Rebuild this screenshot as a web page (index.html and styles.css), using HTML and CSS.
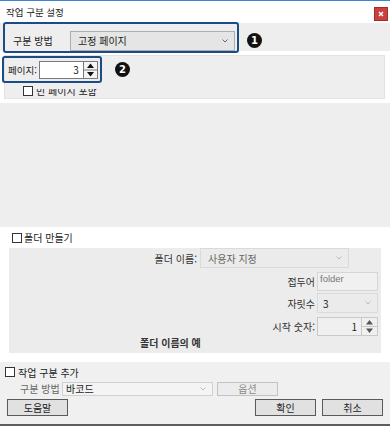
FILE: index.html
```html
<!DOCTYPE html>
<html lang="ko">
<head>
<meta charset="UTF-8">
<meta name="viewport" content="width=device-width, initial-scale=1.0">
<title>작업 구분 설정</title>
<link rel="stylesheet" href="styles.css">
</head>
<body>

<div class="dialog">
    <div class="titlebar">
        <span class="title">작업 구분 설정</span>
        <span class="close">
            <svg width="6" height="6" viewBox="0 0 6 6"><path d="M1 1L5 5M5 1L1 5" stroke="#fff" stroke-width="1.4"/></svg>
        </span>
    </div>

    <div class="method-band">
        <div class="mark mark-method">
            <span class="label">구분 방법</span>
            <div class="select select-method">
                <span>고정 페이지</span>
                <svg class="chev" width="6" height="4" viewBox="0 0 6 4"><path d="M0.5 0.5L3 3L5.5 0.5" fill="none" stroke="#666" stroke-width="1"/></svg>
            </div>
        </div>
        <span class="callout callout-1">1</span>
    </div>

    <div class="page-panel">
        <div class="page-row">
            <div class="mark mark-page">
                <span class="label label-page">페이지:</span>
                <div class="spin">
                    <span class="spin-value">3</span>
                    <svg class="spin-btns" width="15" height="18" viewBox="0 0 15 18">
                        <rect x="0.5" y="0.5" width="14" height="17" fill="#f4f4f4" stroke="#7a7a7a"/>
                        <line x1="1" y1="9" x2="14" y2="9" stroke="#7a7a7a"/>
                        <polygon points="7.5,2.5 11,7 4,7" fill="#111"/>
                        <polygon points="4,11 11,11 7.5,15.5" fill="#111"/>
                    </svg>
                </div>
            </div>
            <span class="callout callout-2">2</span>
        </div>
        <div class="check check-blank">
            <span class="box"></span>
            <span class="clipped">빈 페이지 포함</span>
        </div>
    </div>

    <div class="empty-area"></div>

    <div class="check check-folder">
        <span class="box"></span>
        <span>폴더 만들기</span>
    </div>

    <div class="folder-panel">
        <div class="frow frow-name">
            <span class="flabel">폴더 이름:</span>
            <div class="select select-off select-name">
                <span>사용자 지정</span>
                <svg class="chev" width="6" height="4" viewBox="0 0 6 4"><path d="M0.5 0.5L3 3L5.5 0.5" fill="none" stroke="#bbb" stroke-width="1"/></svg>
            </div>
        </div>
        <div class="frow frow-prefix">
            <span class="flabel">접두어</span>
            <div class="field field-prefix">folder</div>
        </div>
        <div class="frow frow-digits">
            <span class="flabel">자릿수</span>
            <div class="select select-off select-digits">
                <span class="dark">3</span>
                <svg class="chev" width="6" height="4" viewBox="0 0 6 4"><path d="M0.5 0.5L3 3L5.5 0.5" fill="none" stroke="#bbb" stroke-width="1"/></svg>
            </div>
        </div>
        <div class="frow frow-start">
            <span class="flabel">시작 숫자:</span>
            <div class="spin spin-off">
                <span class="spin-value">1</span>
                <svg class="spin-btns" width="17" height="19" viewBox="0 0 17 19">
                    <rect x="0.5" y="0.5" width="16" height="18" fill="#f0f0f0" stroke="#c9c9c9"/>
                    <line x1="1" y1="9.5" x2="16" y2="9.5" stroke="#c9c9c9"/>
                    <polygon points="8.5,3 12,7.5 5,7.5" fill="#555"/>
                    <polygon points="5,11.5 12,11.5 8.5,16" fill="#555"/>
                </svg>
            </div>
        </div>
        <div class="example">폴더 이름의 예</div>
    </div>

    <div class="footer">
        <div class="check check-add">
            <span class="box"></span>
            <span>작업 구분 추가</span>
        </div>
        <div class="add-row">
            <span class="add-label">구분 방법</span>
            <div class="select select-barcode">
                <span>바코드</span>
                <svg class="chev" width="6" height="4" viewBox="0 0 6 4"><path d="M0.5 0.5L3 3L5.5 0.5" fill="none" stroke="#bbb" stroke-width="1"/></svg>
            </div>
            <button type="button" class="btn btn-off">옵션</button>
        </div>
        <div class="button-row">
            <button type="button" class="btn">도움말</button>
            <div class="right-buttons">
                <button type="button" class="btn">확인</button>
                <button type="button" class="btn">취소</button>
            </div>
        </div>
    </div>
</div>

</body>
</html>
```

FILE: styles.css
```css
body {
    margin: 0;
    padding: 0;
    background-color: #fff;
    font-family: "Noto Sans CJK KR", "Noto Sans", sans-serif;
    font-size: 10px;
    color: #222;
    white-space: nowrap;
}

.dialog {
    width: 390px;
    height: 426px;
    overflow: hidden;
}

/* title bar */
.titlebar {
    height: 23px;
    box-sizing: border-box;
    border-top: 1px solid #3a87d1;
    display: flex;
    justify-content: space-between;
    align-items: center;
    padding: 0 2px 0 6px;
}

.title {
    font-size: 9.5px;
    color: #222;
}

.close {
    align-self: flex-start;
    margin-top: 6px;
    width: 14px;
    height: 14px;
    box-sizing: border-box;
    background-color: #c8413f;
    border: 1px solid #a32c2b;
    display: flex;
    align-items: center;
    justify-content: center;
}

/* annotation frames */
.mark {
    box-sizing: border-box;
    border: 2px solid #1d4b87;
    border-radius: 3px;
    display: flex;
    align-items: center;
}

.label {
    flex-shrink: 0;
}

.label-page {
    font-size: 9.5px;
}

.callout {
    flex-shrink: 0;
    width: 15px;
    height: 15px;
    border-radius: 50%;
    background-color: #111;
    color: #fff;
    font-family: "DejaVu Sans", sans-serif;
    font-weight: bold;
    font-size: 10px;
    line-height: 15px;
    text-align: center;
}

/* selects */
.select {
    flex-shrink: 0;
    box-sizing: border-box;
    display: flex;
    align-items: center;
    justify-content: space-between;
    background-color: #e5e5e5;
    border: 1px solid #adadad;
    padding: 0 6px 0 7px;
}

.select-off {
    background-color: #ebebeb;
    border-color: #dadada;
    color: #666;
}

.select-off .dark {
    color: #222;
}

/* first row */
.method-band {
    height: 28px;
    background-color: #eeeeee;
    display: flex;
    align-items: flex-start;
    padding-left: 3px;
}

.mark-method {
    margin-top: -1px;
    width: 236px;
    height: 31px;
    padding: 6px 2px 0 8px;
    justify-content: space-between;
}

.select-method {
    width: 165px;
    height: 20px;
}

.callout-1 {
    margin: 10px 0 0 8px;
}

/* page panel */
.page-panel {
    margin: 4px 5px 0 4px;
    height: 44px;
    box-sizing: border-box;
    border: 1px solid #e2e2e2;
    background-color: #eeeeee;
}

.page-row {
    display: flex;
    align-items: center;
    margin-left: -3px;
}

.mark-page {
    flex-shrink: 0;
    width: 100px;
    height: 27px;
    padding-left: 4px;
    gap: 2px;
}

.spin {
    flex-shrink: 0;
    display: flex;
    height: 18px;
}

.spin-value {
    width: 44px;
    box-sizing: border-box;
    border: 1px solid #7a7a7a;
    border-right: none;
    background-color: #fff;
    text-align: right;
    padding-right: 4px;
    line-height: 16px;
}

.callout-2 {
    margin-left: 13px;
}

/* checkboxes */
.check {
    display: flex;
    align-items: center;
    gap: 3px;
}

.box {
    flex-shrink: 0;
    width: 10px;
    height: 10px;
    box-sizing: border-box;
    border: 1px solid #333;
    background-color: #fff;
}

.check-blank {
    margin: 3px 0 0 18px;
    height: 10px;
}

.clipped {
    clip-path: inset(3px 0 0 0);
    line-height: 10px;
}

.empty-area {
    margin-top: 4px;
    height: 124px;
    background-color: #eeeeee;
}

.check-folder {
    height: 21px;
    padding-left: 12px;
    gap: 2px;
}

/* folder panel */
.folder-panel {
    margin: 0 9px;
    height: 105px;
    background-color: #ececec;
}

.frow {
    display: flex;
    justify-content: flex-end;
    align-items: center;
    padding-right: 3px;
    gap: 2px;
}

.flabel {
    color: #333;
}

.frow-name {
    height: 20px;
    padding-right: 32px;
    gap: 3px;
}

.select-name {
    width: 149px;
    height: 20px;
}

.frow-prefix {
    margin-top: 4px;
    height: 19px;
}

.field-prefix {
    width: 61px;
    height: 19px;
    box-sizing: border-box;
    background-color: #f0f0f0;
    border: 1px solid #d5d5d5;
    color: #777;
    font-family: "Liberation Sans", sans-serif;
    font-size: 9.5px;
    line-height: 12px;
    padding-left: 2px;
}

.frow-digits {
    margin-top: 2px;
    height: 20px;
}

.select-digits {
    width: 61px;
    height: 20px;
    padding-left: 5px;
}

.frow-start {
    margin-top: 4px;
    height: 19px;
}

.spin-off {
    height: 19px;
}

.spin-off .spin-value {
    width: 44px;
    background-color: #f0f0f0;
    border-color: #c9c9c9;
    line-height: 17px;
}

.example {
    padding-left: 131px;
    font-weight: bold;
    line-height: 14px;
    color: #333;
}

/* footer */
.footer {
    margin-top: 9px;
    height: 64px;
    box-sizing: border-box;
    background-color: #f0f0f0;
    border-bottom: 2px solid #5e5e5e;
    padding-top: 5px;
}

.check-add {
    height: 10px;
    padding-left: 5px;
}

.add-row {
    margin-top: 4px;
    display: flex;
    align-items: center;
    padding-left: 20px;
}

.add-label {
    color: #666;
    width: 42px;
}

.select-barcode {
    width: 151px;
    height: 14px;
    background-color: #f4f4f4;
    border-color: #d0d0d0;
    padding-left: 3px;
}

.btn {
    height: 17px;
    width: 61px;
    padding: 0;
    box-sizing: border-box;
    background-color: #e1e1e1;
    border: 1px solid #5a5a5a;
    font-family: "Noto Sans CJK KR", "Noto Sans", sans-serif;
    font-size: 10px;
    line-height: 15px;
    color: #222;
}

.btn-off {
    margin-left: 4px;
    height: 14px;
    line-height: 12px;
    background-color: #ececec;
    border-color: #c3c3c3;
    color: #8a8a8a;
}

.button-row {
    margin-top: 3px;
    display: flex;
    justify-content: space-between;
    padding: 0 7px;
}

.right-buttons {
    display: flex;
    gap: 6px;
}
```
